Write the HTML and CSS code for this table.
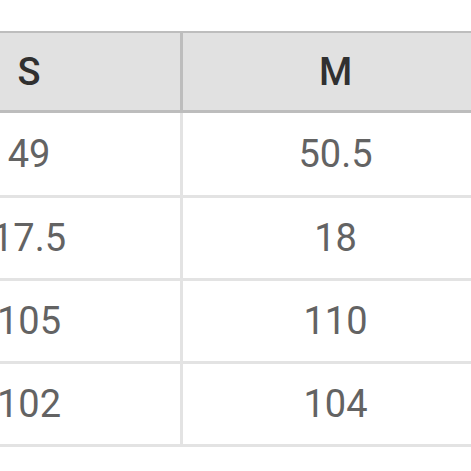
FILE: index.html
```html
<!DOCTYPE html>
<html>
<head>
<meta charset="utf-8">
<link rel="stylesheet" href="styles.css">
</head>
<body>
<div class="size-table">
  <div class="row head">
    <div class="cell">S</div>
    <div class="cell">M</div>
  </div>
  <div class="row body first">
    <div class="cell">49</div>
    <div class="cell">50.5</div>
  </div>
  <div class="row body">
    <div class="cell">17.5</div>
    <div class="cell">18</div>
  </div>
  <div class="row body">
    <div class="cell">105</div>
    <div class="cell">110</div>
  </div>
  <div class="row body">
    <div class="cell">102</div>
    <div class="cell">104</div>
  </div>
</div>
</body>
</html>
```
FILE: styles.css
```css
html, body {
  margin: 0;
  padding: 0;
  background: #ffffff;
  overflow: hidden;
}

.size-table {
  margin-top: 31px;
  margin-left: -122px;
  width: 610px;
  font-family: Roboto, "Noto Sans", sans-serif;
  font-size: 38px;
}

.row {
  display: grid;
  grid-template-columns: 305px 305px;
  box-sizing: border-box;
}

.cell {
  display: flex;
  align-items: center;
  justify-content: center;
}

.cell:first-child {
  border-right: 3px solid #e3e3e3;
}

.head {
  height: 82px;
  background: #e1e1e1;
  border-top: 2px solid #bdbdbd;
  border-bottom: 3px solid #bdbdbd;
  color: #303030;
  font-weight: 500;
}

.head .cell:first-child {
  border-right-color: #bdbdbd;
}

.body {
  height: 83px;
  border-bottom: 3px solid #e3e3e3;
  color: #636363;
}

.body.first {
  height: 85px;
}
```
